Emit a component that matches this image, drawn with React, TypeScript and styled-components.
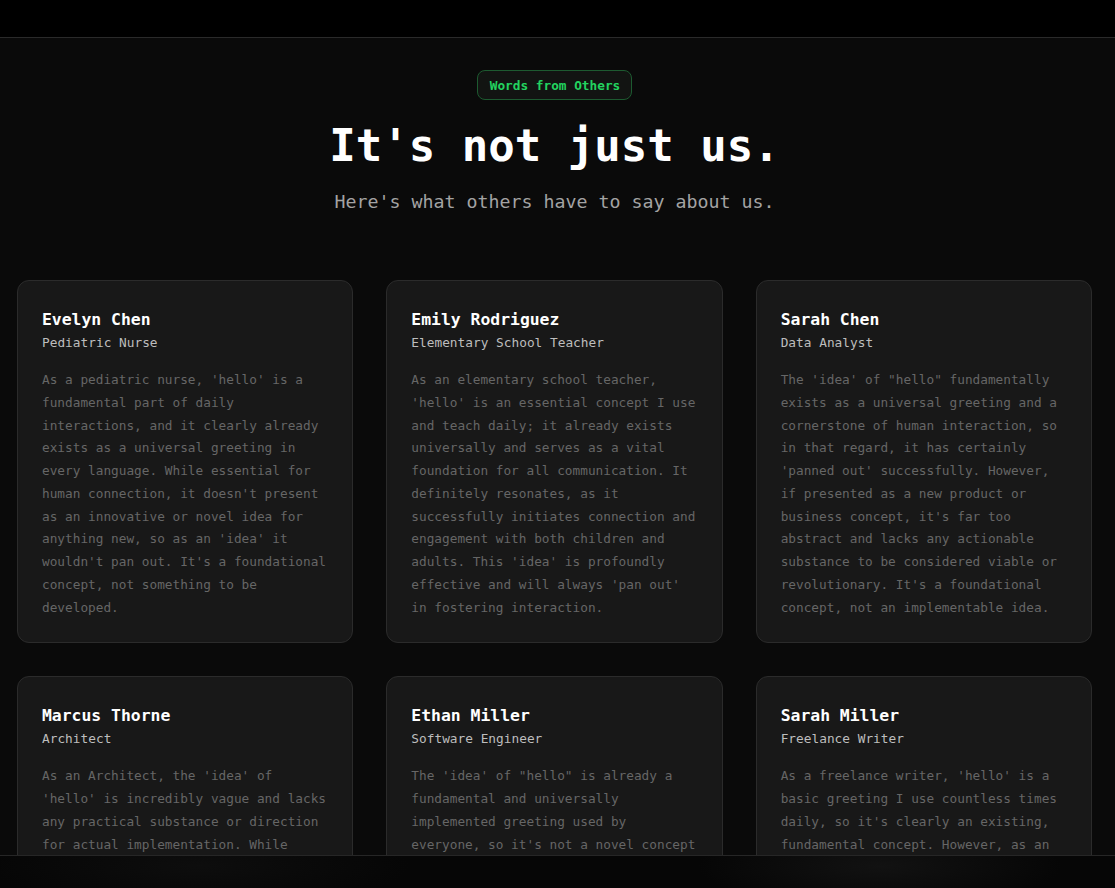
import React from "react";
import styled, { createGlobalStyle } from "styled-components";

const GlobalStyle = createGlobalStyle`
  html, body {
    margin: 0;
    padding: 0;
    background: #0a0a0a;
    scrollbar-width: none;
  }
  html::-webkit-scrollbar, body::-webkit-scrollbar { display: none; }
  * { box-sizing: border-box; }
  body {
    font-family: "DejaVu Sans Mono", "Liberation Mono", monospace;
    color: #fff;
  }
`;

const Page = styled.div`
  min-height: 100vh;
  background: #0a0a0a;
  display: flex;
  flex-direction: column;
`;

const TopBar = styled.header`
  height: 38px;
  background: #000;
  border-bottom: 1px solid #2a2a2a;
  flex-shrink: 0;
`;

const Section = styled.section`
  display: flex;
  flex-direction: column;
  align-items: center;
  padding: 32px 23px 120px 17px;
`;

const Badge = styled.div`
  height: 30px;
  padding: 0 11px 0 12px;
  display: flex;
  align-items: center;
  border: 1px solid #1d5a30;
  border-radius: 8px;
  background: #121412;
  color: #22d35f;
  font-size: 12.75px;
  font-weight: 700;
`;

const Title = styled.h1`
  margin: 20px 0 0;
  font-size: 44px;
  line-height: 52px;
  font-weight: 700;
  color: #fff;
`;

const Subtitle = styled.p`
  margin: 16px 0 0;
  font-size: 18.3px;
  line-height: 28px;
  color: #a3a3a3;
`;

const Grid = styled.div`
  align-self: stretch;
  margin-top: 64px;
  display: grid;
  grid-template-columns: repeat(3, 1fr);
  gap: 33px;
`;

const Card = styled.article`
  background: #181818;
  border: 1px solid #2b2b2b;
  border-radius: 12px;
  padding: 25px 24px 23px;
  display: flex;
  flex-direction: column;
`;

const Name = styled.h3`
  margin: 0;
  font-size: 16.4px;
  line-height: 27px;
  font-weight: 700;
  color: #fff;
`;

const Role = styled.div`
  font-size: 12.8px;
  line-height: 20px;
  color: #bdbdbd;
`;

const Quote = styled.p`
  margin: 16px 0 0;
  font-size: 12.75px;
  line-height: 22.75px;
  color: #666666;
`;

const BottomBar = styled.footer`
  position: fixed;
  left: 0;
  right: 0;
  bottom: 0;
  height: 33px;
  border-top: 1px solid #262626;
  background:
    radial-gradient(ellipse 260px 60px at 880px 10px, rgba(40, 40, 40, 0.35), transparent 70%),
    radial-gradient(ellipse 300px 60px at 200px 10px, rgba(30, 30, 30, 0.3), transparent 70%),
    #060606;
`;

type Testimonial = { name: string; role: string; text: string };

const testimonials: Testimonial[] = [
  {
    name: "Evelyn Chen",
    role: "Pediatric Nurse",
    text: "As a pediatric nurse, 'hello' is a fundamental part of daily interactions, and it clearly already exists as a universal greeting in every language. While essential for human connection, it doesn't present as an innovative or novel idea for anything new, so as an 'idea' it wouldn't pan out. It's a foundational concept, not something to be developed.",
  },
  {
    name: "Emily Rodriguez",
    role: "Elementary School Teacher",
    text: "As an elementary school teacher, 'hello' is an essential concept I use and teach daily; it already exists universally and serves as a vital foundation for all communication. It definitely resonates, as it successfully initiates connection and engagement with both children and adults. This 'idea' is profoundly effective and will always 'pan out' in fostering interaction.",
  },
  {
    name: "Sarah Chen",
    role: "Data Analyst",
    text: "The 'idea' of \"hello\" fundamentally exists as a universal greeting and a cornerstone of human interaction, so in that regard, it has certainly 'panned out' successfully. However, if presented as a new product or business concept, it's far too abstract and lacks any actionable substance to be considered viable or revolutionary. It's a foundational concept, not an implementable idea.",
  },
  {
    name: "Marcus Thorne",
    role: "Architect",
    text: "As an Architect, the 'idea' of 'hello' is incredibly vague and lacks any practical substance or direction for actual implementation. While universally understood, it offers no blueprint, no structure and no clear path forward, so as a project it simply wouldn't pan out.",
  },
  {
    name: "Ethan Miller",
    role: "Software Engineer",
    text: "The 'idea' of \"hello\" is already a fundamental and universally implemented greeting used by everyone, so it's not a novel concept that could be built or launched. As a product, there is nothing new here to ship.",
  },
  {
    name: "Sarah Miller",
    role: "Freelance Writer",
    text: "As a freelance writer, 'hello' is a basic greeting I use countless times daily, so it's clearly an existing, fundamental concept. However, as an original 'idea' to pitch, it lacks any fresh angle and wouldn't pan out.",
  },
];

export default function App() {
  return (
    <Page>
      <GlobalStyle />
      <TopBar />
      <Section>
        <Badge>Words from Others</Badge>
        <Title>It's not just us.</Title>
        <Subtitle>Here's what others have to say about us.</Subtitle>
        <Grid>
          {testimonials.map((t) => (
            <Card key={t.name}>
              <Name>{t.name}</Name>
              <Role>{t.role}</Role>
              <Quote>{t.text}</Quote>
            </Card>
          ))}
        </Grid>
      </Section>
      <BottomBar />
    </Page>
  );
}
